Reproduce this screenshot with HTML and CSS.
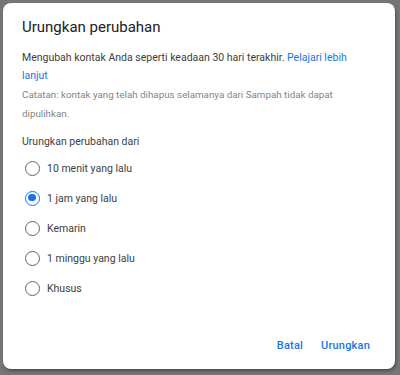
FILE: index.html
```html
<!DOCTYPE html>
<html lang="id">
<head>
<meta charset="utf-8">
<link rel="stylesheet" href="styles.css">
</head>
<body>
<div class="dialog">
  <h1 class="title">Urungkan perubahan</h1>
  <p class="desc">Mengubah kontak Anda seperti keadaan 30 hari terakhir. <a class="link">Pelajari lebih lanjut</a></p>
  <p class="note">Catatan: kontak yang telah dihapus selamanya dari Sampah tidak dapat dipulihkan.</p>
  <p class="label">Urungkan perubahan dari</p>
  <div class="options">
    <div class="opt"><span class="radio"></span><span>10 menit yang lalu</span></div>
    <div class="opt"><span class="radio on"></span><span>1 jam yang lalu</span></div>
    <div class="opt"><span class="radio"></span><span>Kemarin</span></div>
    <div class="opt"><span class="radio"></span><span>1 minggu yang lalu</span></div>
    <div class="opt"><span class="radio"></span><span>Khusus</span></div>
  </div>
  <div class="actions">
    <button class="btn">Batal</button>
    <button class="btn">Urungkan</button>
  </div>
</div>
</body>
</html>
```
FILE: styles.css
```css
html, body { margin: 0; padding: 0; }
body {
  background: #767676;
  width: 400px;
  height: 375px;
  padding: 3px 0 0 3px;
  box-sizing: border-box;
  font-family: Roboto, "Liberation Sans", sans-serif;
}
.dialog {
  width: 392px;
  height: 366px;
  background: #fff;
  border-radius: 8px;
  box-shadow: 1px 2px 3px rgba(0,0,0,0.35);
  box-sizing: border-box;
  padding: 14px 19px 0 19px;
  display: flex;
  flex-direction: column;
}
.title {
  margin: 0;
  font-size: 15px;
  font-weight: 400;
  color: #202124;
  line-height: 20px;
}
.desc {
  margin: 12px 0 0;
  font-size: 10.5px;
  line-height: 18px;
  color: #3c4043;
  padding-right: 20px;
}
.link { color: #1a73e8; text-decoration: none; }
.note {
  margin: 0;
  font-size: 9.8px;
  line-height: 19px;
  color: #80868b;
}
.label {
  margin: 10px 0 0;
  font-size: 10.5px;
  line-height: 18px;
  color: #3c4043;
}
.options {
  display: flex;
  flex-direction: column;
  gap: 12px;
  margin-top: 8px;
  padding-left: 3px;
}
.opt {
  display: flex;
  align-items: center;
  gap: 7px;
  height: 18px;
  font-size: 10.5px;
  color: #3c4043;
}
.radio {
  width: 15px;
  height: 15px;
  border: 1.6px solid #5f6368;
  border-radius: 50%;
  box-sizing: border-box;
  position: relative;
  flex: none;
}
.radio.on { border-color: #1a73e8; }
.radio.on::after {
  content: "";
  position: absolute;
  left: 2.2px; top: 2.2px;
  width: 7.5px; height: 7.5px;
  border-radius: 50%;
  background: #1a73e8;
}
.actions {
  margin-top: auto;
  margin-bottom: 17px;
  margin-right: 6px;
  display: flex;
  justify-content: flex-end;
  gap: 18px;
}
.btn {
  background: none;
  border: 0;
  padding: 0;
  font-family: inherit;
  font-size: 11px;
  font-weight: 500;
  color: #1a73e8;
  letter-spacing: 0.2px;
}
```
